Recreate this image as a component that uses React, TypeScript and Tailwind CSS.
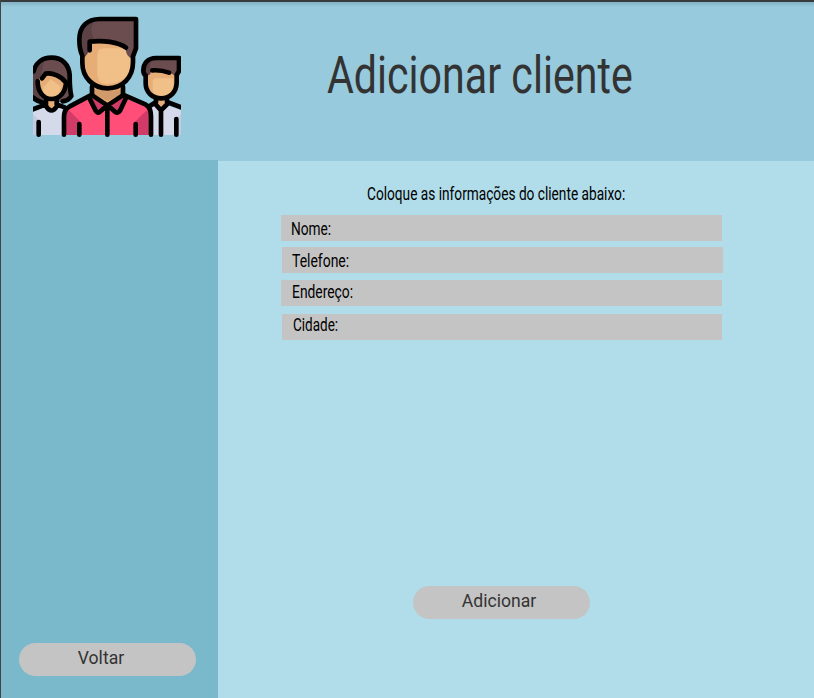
function PeopleIcon() {
  return (
    <svg className="block h-[122px] w-[148px]" viewBox="39 48 444 366" fill="none" strokeLinecap="round" strokeLinejoin="round">
      {/* left person */}
      <path d="M39 215C44 185 65 172 94 172C126 172 148 190 151 222C151 252 154 270 158 290C148 302 136 306 120 306H62C52 306 44 301 39 297Z" fill="#6b4d4f" />
      <path d="M39 215C44 190 58 178 75 173C68 196 66 215 60 235L54 260L62 306C52 306 44 301 39 297Z" fill="#5c4145" />
      <path d="M39 332L76 318H112L134 332V405H39Z" fill="#d5daeb" />
      <path d="M39 343L58 361V405H39Z" fill="#c4cbe0" />
      <path d="M77 286H110V320L94 334L77 320Z" fill="#e6ae76" />
      <path d="M54 240L72 222C95 218 121 229 136 247C134 277 118 296 94 296C70 296 55 276 54 240Z" fill="#e6ae76" />
      <path d="M70 262L93 238L121 259V274C110 298 78 293 70 278Z" fill="#f0c088" />
      {/* right person */}
      <path d="M388 330L405 316H440L483 330V405H388Z" fill="#d5daeb" />
      <path d="M469 355L483 342V405H469Z" fill="#c4cbe0" />
      <path d="M408 285H440V316L424 330L408 316Z" fill="#e6ae76" />
      <path d="M378 208H470V250C470 276 451 294 424 294C396 294 378 276 378 250Z" fill="#e6ae76" />
      <path d="M398 247Q398 235 410 235H460V256C460 278 443 289 424 289C407 289 398 279 398 263Z" fill="#f0c088" />
      <path d="M370 212C370 190 384 174 408 174H477V218L465 227Q453 220 446 217L396 211L390 223L378 228Z" fill="#6b4d4f" />
      <path d="M370 212C370 190 379 179 395 175Q388 192 390 223L378 228Z" fill="#5c4145" />
      {/* centre person */}
      <path d="M132 405V352Q132 330 150 323L211 295L262 310L315 295L376 319Q392 325 393 350V405Z" fill="#ff4f79" />
      <path d="M134 336L149 333L179 363V405H134ZM391 336L378 333L347 363V405H391Z" fill="#d13b67" />
      <path d="M216 250H309V287L263 312L216 287Z" fill="#e6ae76" />
      <path d="M222 268Q262 279 303 268V283L263 303L222 283Z" fill="#d19a6b" />
      <path d="M190 158L210 123C250 119 300 126 324 145L339 173V190C337 232 309 264 263 264C216 264 186 232 186 187Z" fill="#e6ae76" />
      <path d="M232 163Q232 145 252 145H317L332 175V190C332 227 306 252 260 252Q232 252 232 223Z" fill="#f0c088" />
      <path d="M178 118C178 80 202 57 239 57H348V148L340 174H331Q317 165 317 145C290 126 250 121 209 126V151L194 172L184 163Q178 145 178 118Z" fill="#6b4d4f" />
      <path d="M178 118C178 86 196 65 226 59C211 75 211 107 226 119L209 126V151L194 172L184 163Z" fill="#5c4145" />
      <path d="M211 293L218 287L262 313L233 338L226 335ZM315 293L308 287L264 313L295 338L302 335Z" fill="#d13b67" />

      <g stroke="#000" strokeWidth="14">
        <path d="M41 214C47 188 67 173 94 173C127 173 147 194 149 225C149 250 149 269 154 288Q145 302 128 304" />
        <path d="M66 235L77 221C98 217 125 230 137 247M53 243C52 274 70 297 94 297C120 297 137 276 138 246" />
        <path d="M38 292Q50 303 66 307M78 301V313L39 328M110 301V313L134 322M78 318Q94 345 111 318" />
        <path d="M56 366V404" />
        <path d="M377 226V250C377 277 397 295 424 295C451 295 470 276 470 247V225L477 213V174H408C382 174 370 192 370 211Q370 222 377 227M397 211C413 210 431 212 447 218" />
        <path d="M408 296V306L386 320M441 296V306L483 322M403 309L423 331L445 309M423 331V404M469 357V404" />
        <path d="M187 167V188C187 232 219 265 263 265C308 265 339 232 339 187V169L348 145V57H239C202 57 178 80 178 118Q178 150 187 167M209 151V125C250 120 294 126 318 143" />
        <path d="M216 260V284L148 320Q132 329 132 350V404M309 260V284L376 313Q393 321 393 350V404" />
        <path d="M217 286L262 316L239 336Q233 341 227 332L209 296M308 286L263 316L286 336Q294 341 300 332L317 296M262 316V404M178 372V404M347 372V404" />
      </g>
    </svg>
  );
}

const narrow = "block w-max origin-left whitespace-nowrap font-['Roboto',sans-serif]";

const fields = [
  { label: "Nome:", row: "ml-[63px] w-[441px] pl-[10px]", fit: "scale-x-[0.76] leading-[28px]" },
  { label: "Telefone:", row: "ml-[64px] mt-[6px] w-[441px] pl-[10px]", fit: "scale-x-[0.775] leading-[28px]" },
  { label: "Endereço:", row: "ml-[63px] mt-[7px] w-[441px] pl-[11px]", fit: "scale-x-[0.77] leading-[23px]" },
  { label: "Cidade:", row: "ml-[64px] mt-[8px] w-[440px] pl-[11px]", fit: "scale-x-[0.75] leading-[21px]" },
];

export default function App() {
  return (
    <div className="flex h-[698px] w-[814px] flex-col overflow-hidden border-l border-[#444] bg-[#b1dce9]">
      <header className="flex h-[161px] shrink-0 border-t-2 border-[#383b3e] bg-[#97cadc] bg-[linear-gradient(#83b2c3,#97cadc_5px)]">
        <div className="ml-8 mt-[14px] w-[148px] shrink-0">
          <PeopleIcon />
        </div>
        <h1 className={`${narrow} ml-[146px] mt-[44px] scale-x-[0.807] text-[51px] leading-[60px] text-[#333]`}>
          Adicionar cliente
        </h1>
      </header>
      <div className="flex flex-1">
        <aside className="-mt-px flex w-[217px] shrink-0 flex-col justify-end bg-[#7ab9cb] pb-[22px] pl-[18px]">
          <button className="h-[33px] w-[177px] rounded-full bg-[#c4c4c4] pb-[3px] pr-[13px] text-center font-['Roboto',sans-serif] text-[17.6px] leading-[30px] text-[#333]">
            Voltar
          </button>
        </aside>
        <main className="flex flex-1 flex-col">
          <p className={`${narrow} ml-[149px] mt-[21px] h-[33px] scale-x-[0.76] text-[18px] leading-6 text-black`}>
            Coloque as informações do cliente abaixo:
          </p>
          {fields.map((f) => (
            <div key={f.label} className={`h-[26px] shrink-0 bg-[#c4c4c4] ${f.row}`}>
              <span className={`${narrow} ${f.fit} text-[18px] text-black`}>{f.label}</span>
            </div>
          ))}
          <button className="ml-[194.5px] mt-[246px] h-[33px] w-[177px] rounded-full bg-[#c4c4c4] pb-[3px] pr-[4px] text-center font-['Roboto',sans-serif] text-[17.6px] leading-[30px] text-[#333]">
            Adicionar
          </button>
        </main>
      </div>
    </div>
  );
}
